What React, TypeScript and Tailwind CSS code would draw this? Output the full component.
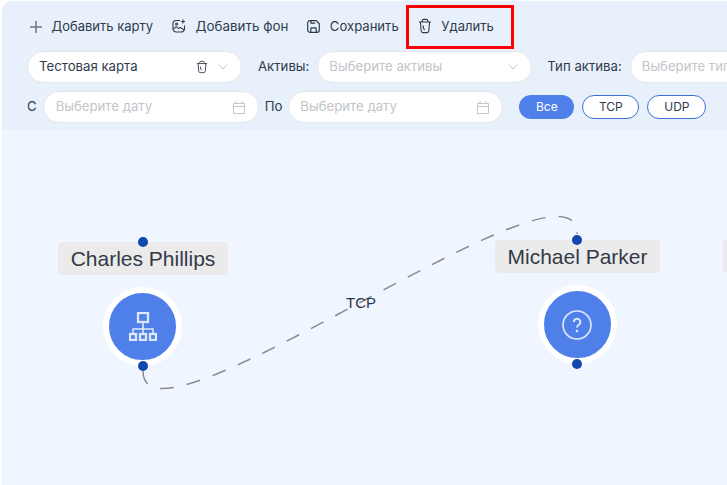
function TrashIcon({ className }: { className?: string }) {
    return (
        <svg viewBox="0 0 14 16" fill="none" stroke="currentColor" strokeWidth="1.1" className={className}>
            <path d="M1 4h12" />
            <path d="M4.3 4V2.6c0-.8.5-1.2 1.2-1.2h3c.7 0 1.2.4 1.2 1.2V4" />
            <path d="M2.4 4l.8 9c.1.9.7 1.6 1.6 1.6h4.4c.9 0 1.5-.7 1.6-1.6l.8-9" />
            <path d="M5.2 7.5c0 2.4.5 4 1.8 4" />
        </svg>
    );
}

function ChevronIcon() {
    return (
        <svg width="10" height="6" viewBox="0 0 10 6" fill="none" stroke="#c2c5c9" strokeWidth="1" className="shrink-0">
            <path d="M.7.7L5 5l4.3-4.3" />
        </svg>
    );
}

function PlusIcon() {
    return (
        <svg width="12" height="12" viewBox="0 0 12 12" stroke="#6b7484" strokeWidth="1.5" className="shrink-0">
            <path d="M0 6h12M6 0v12" />
        </svg>
    );
}

function ImageAddIcon() {
    return (
        <svg width="14" height="14" viewBox="0 0 14 14" fill="none" stroke="currentColor" strokeWidth="1.1" className="shrink-0">
            <path d="M8 1.5H4C2 1.5 1 2.6 1 4.5v5C1 11.6 2.4 13 4.5 13h4.2c2.2 0 3.8-1.3 3.8-3.6V6.5" />
            <path d="M1.2 10.2l3-2.6 2.4 2 1.6-1.2 4.2 2.8" />
            <circle cx="4.6" cy="5" r="1" />
            <path d="M11 .5v4M9 2.5h4" />
        </svg>
    );
}

function SaveIcon() {
    return (
        <svg width="13" height="13" viewBox="0 0 13 13" fill="none" stroke="currentColor" strokeWidth="1.2" className="shrink-0">
            <path d="M3 .7h6.2l3.1 3.1V10c0 1.4-.9 2.3-2.3 2.3H3C1.6 12.3.7 11.4.7 10V3C.7 1.6 1.6.7 3 .7z" />
            <path d="M3.8 12.2V8.6c0-.5.3-.8.8-.8h3.8c.5 0 .8.3.8.8v3.6" />
            <path d="M4 .8v2.4h4.2" />
        </svg>
    );
}

function CalendarIcon() {
    return (
        <svg width="12" height="13" viewBox="0 0 12 13" fill="none" stroke="currentColor" strokeWidth="1" className="shrink-0">
            <path d="M.5 2.5h11v10H.5zM.5 5.5h11M3 0v3M9 0v3" />
        </svg>
    );
}

function NetworkIcon() {
    return (
        <svg width="28" height="29" viewBox="0 0 28 29" fill="none" stroke="#dde8fc" strokeWidth="2.3">
            <rect x="9" y="1" width="10" height="9" />
            <path d="M14 10v11M4 21v-4h20v4" strokeWidth="1.6" />
            <rect x="1" y="22" width="6" height="6" />
            <rect x="11" y="22" width="6" height="6" />
            <rect x="21" y="22" width="6" height="6" />
        </svg>
    );
}

function QuestionIcon() {
    return (
        <svg width="30" height="30" viewBox="0 0 30 30" fill="none" stroke="#dde8fc" strokeWidth="1.6">
            <circle cx="15" cy="15" r="14" />
            <path d="M11.8 12a3.3 3.3 0 1 1 5.2 2.7c-1.2.8-2 1.3-2 2.8" strokeWidth="2" />
            <circle cx="15" cy="21" r="1.3" fill="#dde8fc" stroke="none" />
        </svg>
    );
}

function ToolbarButton({ icon, label, textClass }: { icon: React.ReactNode; label: string; textClass: string }) {
    return (
        <div className={`flex items-center gap-[9.5px] text-[#2f3a4c] ${textClass}`}>
            {icon}
            <span>{label}</span>
        </div>
    );
}

function Field({ className, placeholder, children }: { className: string; placeholder?: string; children?: React.ReactNode }) {
    return (
        <div className={`flex h-[32px] shrink-0 items-center justify-between rounded-full border border-[#e3e6ea] bg-white pl-[11px] pr-[13px] text-[13.2px] text-[#c2c5c9] ${className}`}>
            <span className="whitespace-nowrap">{placeholder}</span>
            {children}
        </div>
    );
}

function Node({ name, icon, labelClass, dotClass }: { name: string; icon: React.ReactNode; labelClass: string; dotClass?: string }) {
    return (
        <div className="relative flex flex-col items-center">
            <div className={`rounded-[4px] bg-[#ebebeb] py-[4px] text-center font-['Liberation_Sans',sans-serif] text-[21px] leading-[25px] text-[#333a47] ${labelClass}`}>
                {name}
            </div>
            <span className={`absolute top-[-5px] h-[10px] w-[10px] rounded-full bg-[#1247ad] ${dotClass}`} />
            <div className="mr-[1px] mt-[12px] flex h-[79px] w-[79px] items-center justify-center rounded-full border-[6px] border-white bg-[#4f80ea]">
                {icon}
            </div>
            <span className={`absolute bottom-[-5px] h-[10px] w-[10px] rounded-full bg-[#1247ad] ${dotClass}`} />
        </div>
    );
}

export default function App() {
    return (
        <div className="relative h-[485px] w-[727px] overflow-hidden bg-white font-['Inter',sans-serif]">
            <div className="ml-[2px] mt-[1px] h-[484px] overflow-hidden rounded-tl-[10px] bg-[#f0f6ff]">
                <div className="flex h-[129px] flex-col bg-[#e8f1fb] pl-[25px]">
                    <div className="flex h-[49px] items-center gap-[19px] pl-[3px] pt-[2px]">
                        <ToolbarButton icon={<PlusIcon />} label="Добавить карту" textClass="text-[13px]" />
                        <ToolbarButton icon={<ImageAddIcon />} label="Добавить фон" textClass="text-[13.4px]" />
                        <ToolbarButton icon={<SaveIcon />} label="Сохранить" textClass="text-[13.1px]" />
                        <ToolbarButton icon={<TrashIcon className="h-[16px] w-[14px] shrink-0" />} label="Удалить" textClass="text-[13.1px]" />
                    </div>
                    <div className="mt-[1px] flex items-center">
                        <Field className="w-[215px] !text-[#2f3a4c]" placeholder="Тестовая карта">
                            <span className="flex items-center gap-[10px]">
                                <TrashIcon className="h-[14px] w-[12px] text-[#3f4856]" />
                                <ChevronIcon />
                            </span>
                        </Field>
                        <span className="ml-[16px] mr-[8px] whitespace-nowrap text-[13.2px] text-[#2f3a4c]">Активы:</span>
                        <Field className="w-[215px]" placeholder="Выберите активы">
                            <ChevronIcon />
                        </Field>
                        <span className="ml-[15px] mr-[8px] whitespace-nowrap text-[13.2px] text-[#2f3a4c]">Тип актива:</span>
                        <Field className="w-[200px]" placeholder="Выберите тип" />
                    </div>
                    <div className="mt-[8px] flex items-center">
                        <span className="mr-[6px] text-[13.2px] text-[#2f3a4c]">С</span>
                        <Field className="w-[216px] pl-[12px]" placeholder="Выберите дату">
                            <CalendarIcon />
                        </Field>
                        <span className="mx-[6px] text-[13.2px] text-[#2f3a4c]">По</span>
                        <Field className="w-[215px]" placeholder="Выберите дату">
                            <CalendarIcon />
                        </Field>
                        <div className="ml-[16px] flex h-[24px] w-[55px] items-center justify-center rounded-full bg-[#4f80ea] text-[12px] text-white">Все</div>
                        <div className="ml-[8px] flex h-[24px] w-[57px] items-center justify-center rounded-full border border-[#3c6fd8] bg-white text-[12px] text-[#2f3a4c]">TCP</div>
                        <div className="ml-[8px] flex h-[24px] w-[59px] items-center justify-center rounded-full border border-[#3c6fd8] bg-white text-[12px] text-[#2f3a4c]">UDP</div>
                    </div>
                </div>
            </div>

            {/* Diagram */}
            <svg className="absolute left-0 top-0" width="727" height="485" fill="none">
                <path d="M143 371 C143 466 577 139 577 234" stroke="#8a8a8a" strokeWidth="1.5" strokeDasharray="14 13.3" />
            </svg>
            <span className="absolute left-[346px] top-[294px] font-['Liberation_Sans',sans-serif] text-[15px] leading-[17px] text-[#2c3442]">TCP</span>
            <div className="absolute left-[58px] top-[242px]">
                <Node name="Charles Phillips" labelClass="w-[170px]" icon={<NetworkIcon />} />
            </div>
            <div className="absolute left-[495px] top-[240px]">
                <Node name="Michael Parker" labelClass="w-[165px]" dotClass="mr-[1px]" icon={<QuestionIcon />} />
            </div>
            <div className="absolute left-[723px] top-[240px] h-[33px] w-[20px] rounded-[4px] bg-[#ebebeb]" />

            {/* Annotation frame */}
            <div className="absolute left-[406px] top-[5px] h-[44px] w-[108px] border-[3px] border-[#ff0000]" />
        </div>
    );
}
